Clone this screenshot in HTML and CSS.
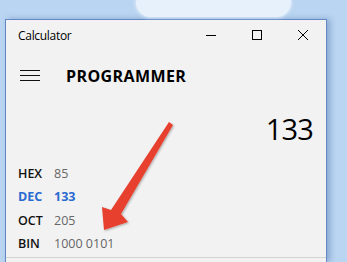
FILE: index.html
```html
<!DOCTYPE html>
<html lang="en">
<head>
    <meta charset="UTF-8">
    <meta name="viewport" content="width=device-width, initial-scale=1.0">
    <title>Calculator</title>
    <link rel="stylesheet" href="styles.css">
</head>
<body>
    <div class="cloud"></div>

    <div class="window">
        <div class="titlebar">
            <span class="title">Calculator</span>
            <div class="controls">
                <span class="ctl">
                    <svg width="10" height="10" viewBox="0 0 10 10"><path d="M0 5.5H10" stroke="#000" stroke-width="1"/></svg>
                </span>
                <span class="ctl">
                    <svg width="10" height="10" viewBox="0 0 10 10"><rect x="0.5" y="0.5" width="9" height="9" fill="none" stroke="#000" stroke-width="1"/></svg>
                </span>
                <span class="ctl">
                    <svg width="10" height="10" viewBox="0 0 10 10"><path d="M0 0L10 10M10 0L0 10" stroke="#000" stroke-width="1"/></svg>
                </span>
            </div>
        </div>

        <div class="header">
            <span class="burger"><i></i><i></i><i></i></span>
            <h1>PROGRAMMER</h1>
        </div>

        <div class="display">133</div>

        <ul class="bases">
            <li><span class="lbl">HEX</span><span class="val">85</span></li>
            <li class="active"><span class="lbl">DEC</span><span class="val">133</span></li>
            <li><span class="lbl">OCT</span><span class="val">205</span></li>
            <li><span class="lbl">BIN</span><span class="val">1000 0101</span></li>
        </ul>

        <div class="sep"></div>
    </div>

    <!-- annotation arrow -->
    <svg class="arrow" width="347" height="262" viewBox="0 0 347 262">
        <defs>
            <filter id="sh" x="-20%" y="-20%" width="140%" height="140%">
                <feDropShadow dx="1" dy="1" stdDeviation="0.8" flood-color="#000" flood-opacity="0.3"/>
            </filter>
        </defs>
        <polygon filter="url(#sh)" fill="#e8412f"
            points="169,122 173,125 121,214 128,222 104,230 102,207 111,210"/>
    </svg>
</body>
</html>
```

FILE: styles.css
```css
* {
    margin: 0;
    padding: 0;
    box-sizing: border-box;
}

body {
    width: 347px;
    height: 262px;
    overflow: hidden;
    background: #bad5f1;
    padding: 19px 0 0 5px;
    font-family: 'Open Sans', 'Noto Sans', sans-serif;
    color: #000;
    position: relative;
}

.cloud {
    position: absolute;
    left: 136px;
    top: -12px;
    width: 155px;
    height: 29px;
    border-radius: 15px;
    background: #e7f1fc;
    box-shadow: 0 0 3px 1px #dbe9f8;
}

.window {
    width: 322px;
    height: 243px;
    background: #f2f2f2;
    border: 1px solid #6488c6;
    border-bottom: none;
    box-shadow: 3px 0 6px rgba(40, 80, 150, 0.35);
}

.titlebar {
    height: 30px;
    display: flex;
    align-items: center;
    justify-content: space-between;
}

.title {
    font-size: 12px;
    padding-left: 12px;
    margin-top: 1px;
    letter-spacing: -0.3px;
}

.controls {
    display: flex;
}

.ctl {
    width: 46px;
    height: 30px;
    display: flex;
    align-items: center;
    justify-content: center;
}

.header {
    height: 50px;
    display: flex;
    align-items: center;
    padding-left: 14px;
}

.burger {
    width: 20px;
    display: flex;
    flex-direction: column;
    gap: 4px;
    margin-right: 26px;
    margin-top: 1px;
}

.burger i {
    display: block;
    height: 1px;
    background: #111;
}

h1 {
    font-size: 16px;
    font-weight: 700;
    letter-spacing: 0.4px;
    margin-top: 1px;
}

.display {
    font-size: 29px;
    text-align: right;
    padding-right: 13px;
    line-height: 38px;
    height: 38px;
    margin-top: 10px;
    letter-spacing: -0.8px;
}

.bases {
    list-style: none;
    padding-left: 12px;
    margin-top: 14px;
}

.bases li {
    height: 23.3px;
    display: flex;
    align-items: center;
    font-size: 12.5px;
}

.lbl {
    width: 36px;
    font-weight: 600;
    color: #111;
}

.val {
    color: #666;
}

.bases li.active .lbl,
.bases li.active .val {
    color: #2a6bd1;
    font-weight: 700;
}

.sep {
    margin-top: 2px;
    height: 1px;
    background: #d4d4d4;
}

.arrow {
    position: absolute;
    left: 0;
    top: 0;
}
```
